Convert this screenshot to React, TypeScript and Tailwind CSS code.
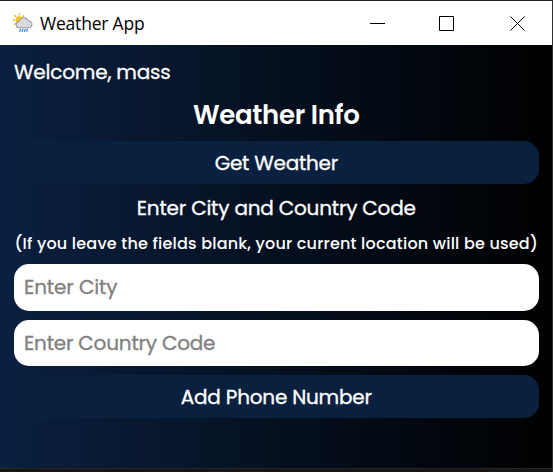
import type { ReactNode } from 'react';

function WeatherIcon() {
  return (
    <svg className="h-5 w-[22px] shrink-0" viewBox="0 0 22 20" fill="none">
      <g stroke="#f0b429" strokeWidth="1.4" strokeLinecap="round">
        <path d="M7.4.9v1M3 2.6l.7.7M11.7 2.7l-.7.7M1.2 7h1M2.6 11.2l.8-.6" />
      </g>
      <circle cx="7.2" cy="7" r="3.8" fill="#fcc419" />
      <path
        d="M7.4 14.8a3.2 3.2 0 0 1-.4-6.4 4.9 4.9 0 0 1 9.4-.5 3.5 3.5 0 0 1 1 6.9Z"
        fill="#d9dade"
        stroke="#909398"
        strokeWidth="1"
      />
      <path d="m8.6 16-1 2.7M11 16l-1 2.7M13.4 16l-1 2.7M15.6 16l-1 2.7" stroke="#2584e8" strokeWidth="1.2" />
    </svg>
  );
}

function TitleBar() {
  return (
    <header className="flex h-11 items-center bg-white pl-3 text-black [-webkit-text-stroke:0]">
      <WeatherIcon />
      <span className="ml-1.5 w-[110px] whitespace-nowrap font-['Open_Sans',sans-serif] text-[17.5px] tracking-[-0.2px]">
        Weather App
      </span>
      <svg className="ml-[220px] h-4 w-4 shrink-0" viewBox="0 0 16 16" stroke="currentColor" fill="none">
        <path d="M0 8.5h15" />
      </svg>
      <svg className="ml-[53px] h-4 w-4 shrink-0" viewBox="0 0 16 16" stroke="currentColor" fill="none">
        <path d="M.5 1.5h14v14H.5z" />
      </svg>
      <svg className="ml-[55px] h-4 w-4 shrink-0" viewBox="0 0 16 16" stroke="currentColor" fill="none">
        <path d="m.5 1.5 14 14M14.5 1.5l-14 14" />
      </svg>
    </header>
  );
}

function ActionButton({ children }: { children: ReactNode }) {
  return (
    <button className="flex h-[43px] w-full items-center justify-center whitespace-nowrap rounded-[15px] bg-[#0a203f]">
      {children}
    </button>
  );
}

export default function App() {
  return (
    <div className="flex h-[472px] w-[553px] flex-col overflow-hidden border-r border-t border-r-[#303030] border-t-[#211f21] bg-[#181616] font-[Poppins,Inter,sans-serif] text-[20px] text-white [-webkit-text-stroke:0.3px]">
      <TitleBar />
      <main className="flex h-[423px] flex-col bg-linear-to-r/srgb from-[#0a2040] to-black pl-[14px] pr-[13.5px]">
        <p className="mt-3 h-[30px] whitespace-nowrap leading-[30px] tracking-[-0.2px]">Welcome, mass</p>
        <h1 className="mt-2 h-10 whitespace-nowrap text-center text-[26px] font-semibold leading-10 tracking-[-0.3px] [-webkit-text-stroke:0]">
          Weather Info
        </h1>
        <div className="mt-[6px]">
          <ActionButton>
            <span className="tracking-[-0.25px]">Get Weather</span>
          </ActionButton>
        </div>
        <p className="mt-[9px] h-[30px] whitespace-nowrap text-center leading-[30px] tracking-[-0.2px]">
          Enter City and Country Code
        </p>
        <p className="mt-[9px] flex h-6 justify-center whitespace-nowrap text-[16px] font-medium leading-6 tracking-[0.21px] [-webkit-text-stroke:0]">
          (If you leave the fields blank, your current location will be used)
        </p>
        <input
          className="mt-[8px] h-[46.5px] w-full shrink-0 rounded-[15px] bg-white px-[10px] tracking-[-0.1px] text-black placeholder:text-[#808080]"
          placeholder="Enter City"
        />
        <input
          className="mt-[9.5px] h-[46px] w-full shrink-0 rounded-[15px] bg-white px-[10px] tracking-[-0.2px] text-black placeholder:text-[#808080]"
          placeholder="Enter Country Code"
        />
        <div className="mt-[9px]">
          <ActionButton>
            <span className="tracking-[-0.22px]">Add Phone Number</span>
          </ActionButton>
        </div>
      </main>
      <footer className="h-1 border-t border-[#292624] bg-[#171515]" />
    </div>
  );
}
